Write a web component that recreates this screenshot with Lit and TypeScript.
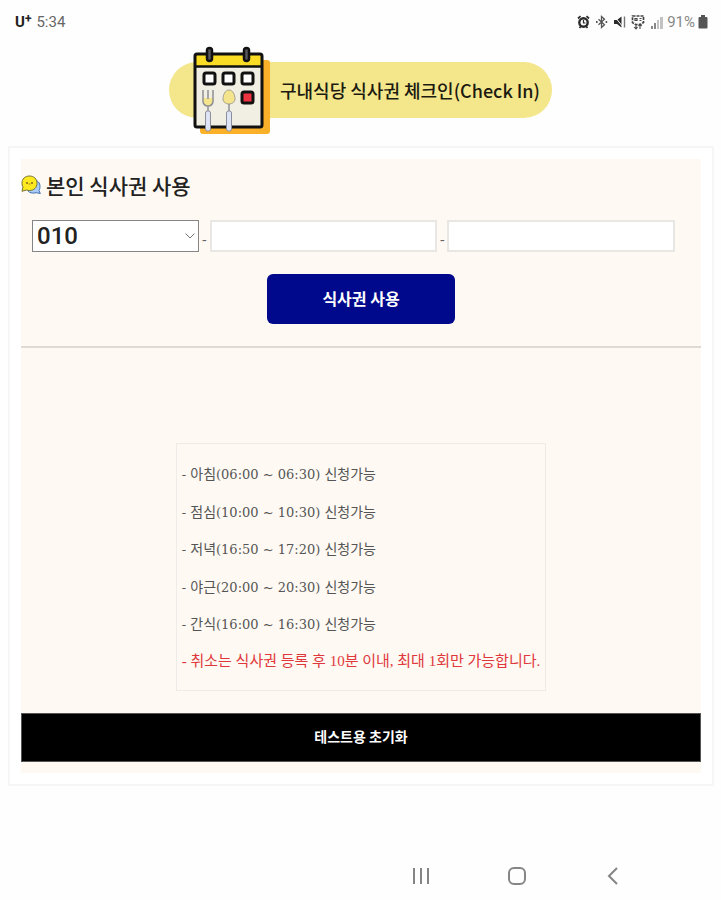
import { LitElement, html, css, svg } from "lit";
import { customElement, state } from "lit/decorators.js";

const MEALS = [
  { name: "아침", time: "(06:00 ~ 06:30)" },
  { name: "점심", time: "(10:00 ~ 10:30)" },
  { name: "저녁", time: "(16:50 ~ 17:20)" },
  { name: "야근", time: "(20:00 ~ 20:30)" },
  { name: "간식", time: "(16:00 ~ 16:30)" },
];

@customElement("status-bar")
class StatusBar extends LitElement {
  static styles = css`
    :host {
      display: flex;
      justify-content: space-between;
      align-items: center;
      height: 44px;
      padding: 0 13px 0 15px;
      font: 15px/20px Roboto, sans-serif;
      color: #666;
    }
    .side {
      display: flex;
      align-items: center;
      gap: 5px;
    }
    .carrier {
      font-weight: 700;
      color: #222;
    }
    .plus {
      font-size: 12px;
      line-height: 12px;
      vertical-align: 4px;
    }
    .battery {
      display: flex;
      align-items: center;
      gap: 3px;
      color: #888;
    }
    svg {
      display: block;
    }
  `;

  render() {
    return html`
      <div class="side">
        <span class="carrier">U<span class="plus">+</span></span>
        <span>5:34</span>
      </div>
      <div class="side">
        <svg width="13" height="14" viewBox="0 0 13 14" fill="none" stroke="#2b2b2b">
          <circle cx="6.5" cy="7.5" r="4.2" stroke-width="2.4" />
          <path d="M1 3.5L3.5 1.2M12 3.5L9.5 1.2M2.5 13l1.5-2M10.5 13L9 11" stroke-width="1.7" />
          <path d="M6.5 5v3h2" stroke-width="1.2" />
        </svg>
        <svg width="13" height="14" viewBox="0 0 13 14" fill="none" stroke="#555" stroke-width="1.3">
          <path d="M3.5 4.2l6 5.6L6.5 12.5V1.5l3 2.7-6 5.6" />
          <path d="M1 7h1.6M10.6 7h1.6" stroke-width="1.8" />
        </svg>
        <svg width="13" height="14" viewBox="0 0 13 14">
          <path d="M1 5h3l4.5-3.500v11L4 9H1z" fill="#2b2b2b" />
          <path d="M1.500 1.500l9 11" stroke="#fff" stroke-width="1" />
          <path d="M11.500 1.500v11" stroke="#777" stroke-width="1.4" />
        </svg>
        <svg width="14" height="15" viewBox="0 0 14 15" fill="none" stroke="#444">
          <path d="M1.500 1h11v6.500l-3 2h-5l-3-2z" stroke-width="1.7" stroke-dasharray="3 1" />
          <path d="M4 3.500h2v2H4zM8.500 3.500h2M8.500 5.500h2" stroke-width="1.2" />
          <path d="M5 9v5M3.200 12L5 14l1.500-2M9 14V9M7.500 11L9 9l1.800 2" stroke-width="1.1" />
        </svg>
        <div class="battery">
          <svg width="14" height="13" viewBox="0 0 14 13">
            <path d="M1 10h2v3H1zM4 7h2v6H4z" fill="#888" />
            <path d="M7 4h2v9H7zM10 1h3v12h-3z" fill="#c2c2c2" />
          </svg>
          <span>91%</span>
          <svg width="10" height="14" viewBox="0 0 10 14">
            <path d="M3 0h4v2h1.500q1 0 1 1v9.500q0 1-1 1h-7q-1 0-1-1V3q0-1 1-1H3z" fill="#555" />
          </svg>
        </div>
      </div>
    `;
  }
}

@customElement("meal-calendar")
class MealCalendar extends LitElement {
  static styles = css`
    :host {
      display: block;
    }
    svg {
      display: block;
    }
  `;

  render() {
    const box = (x: number, y: number, fill: string) =>
      svg`<rect x=${x} y=${y} width="11" height="11" rx="2" fill=${fill} stroke="#111" stroke-width="3" />`;
    return html`
      <svg width="82" height="89" viewBox="-2 -1 82 89" aria-hidden="true">
        <rect x="7" y="13" width="70" height="74" rx="3" fill="#fbb029" />
        <rect x="2" y="7" width="67" height="73" rx="3" fill="#f1eee3" />
        <path d="M2 7h67v12H2z" fill="#fbdc25" />
        <path d="M2 19.500h67" stroke="#111" stroke-width="2.5" />
        <rect x="2" y="7" width="67" height="73" rx="2" fill="none" stroke="#111" stroke-width="3" />
        <rect x="14" y="1" width="5" height="13" rx="2.5" fill="#55555c" stroke="#111" stroke-width="2.5" />
        <rect x="51" y="1" width="5" height="13" rx="2.5" fill="#55555c" stroke="#111" stroke-width="2.5" />
        ${box(11, 26, "#fff")} ${box(30, 26, "#fff")} ${box(49, 26, "#fff")} ${box(49, 45, "#ee3340")}
        <path d="M10 51h10v4q-1 4-5 4t-5-4z" fill="#f4e58c" />
        <path d="M10 43v12q1 4 5 4t5-4V43M15 43v9M15 59v6" fill="none" stroke="#8f8f94" stroke-width="1.5" />
        <path d="M36 43c-4 0-6 5-6 9 0 3 3 5 6 5s6-2 6-5c0-4-2-9-6-9z" fill="#f4e58c" stroke="#a5a294" />
        <path d="M36 57v8" stroke="#8f8f94" stroke-width="1.5" />
        <rect x="12.500" y="64" width="5" height="20" rx="2" fill="#dfe4f4" stroke="#8b8e9c" />
        <rect x="33.500" y="64" width="5" height="20" rx="2" fill="#dfe4f4" stroke="#8b8e9c" />
      </svg>
    `;
  }
}

@customElement("app-root")
class AppRoot extends LitElement {
  static styles = css`
    :host {
      display: flex;
      flex-direction: column;
      min-height: 100vh;
      background: #fefefe;
      color: #222;
      font-family: "Noto Sans CJK KR", sans-serif;
    }
    * {
      box-sizing: border-box;
    }
    .header {
      display: flex;
      justify-content: center;
      padding: 3px 0 10px;
    }
    .pill {
      display: flex;
      align-items: center;
      height: 56px;
      margin: 15px 0 18px;
      padding: 0 12px 0 22px;
      gap: 7px;
      border-radius: 28px;
      background: #f3e68b;
    }
    .pill h1 {
      margin: 0;
      font-size: 18px;
      line-height: 28px;
      font-weight: 500;
      color: #1c1a10;
      white-space: nowrap;
    }
    .panel {
      margin: 0 7px 0 8px;
      padding: 11px;
      border: 2px solid #f6f6f6;
      background: #fff;
    }
    .body {
      display: flex;
      flex-direction: column;
      padding-bottom: 11px;
      background: #fef9f2;
    }
    .title {
      display: flex;
      align-items: center;
      gap: 5px;
      margin: 10px 0 19px;
      font-size: 21px;
      line-height: 32px;
      font-weight: 500;
    }
    .phone {
      display: grid;
      grid-template-columns: 167fr 11px 228fr 10px 228fr;
      padding: 0 26px 0 11px;
    }
    .select {
      position: relative;
      display: flex;
    }
    .select select {
      appearance: none;
      width: 100%;
      height: 32px;
      padding: 0 4px;
      border: 1px solid #858585;
      border-radius: 0;
      background: #fff;
      color: #222;
      font: 500 24px/28px Roboto, sans-serif;
    }
    .select svg {
      position: absolute;
      right: 3px;
      top: 12px;
      pointer-events: none;
    }
    .phone input {
      width: 100%;
      height: 32px;
      padding: 0 6px;
      border: 2px solid #e9e7e3;
      background: #fff;
      font: 500 24px/28px Roboto, sans-serif;
    }
    .dash {
      align-self: end;
      text-align: center;
      font: 14px/24px "Liberation Serif", serif;
      color: #666;
    }
    .use {
      align-self: center;
      width: 188px;
      height: 50px;
      margin: 22px 0;
      padding: 0 0 3px;
      border: 0;
      border-radius: 6px;
      background: #00098c;
      color: #fff;
      font: 700 16px/24px "Noto Sans CJK KR", sans-serif;
    }
    .rule {
      width: 100%;
      margin: 0;
      border: 0;
      border-top: 2px solid #dedbd6;
    }
    .notes {
      display: flex;
      flex-direction: column;
      justify-content: space-between;
      align-self: center;
      min-height: 248px;
      margin: 95px 0 22px;
      padding: 19px 5px;
      border: 1px solid #eeebe8;
      list-style: none;
      font-size: 14px;
      line-height: 20px;
      color: #555;
      white-space: nowrap;
    }
    .num {
      font-family: "DejaVu Serif", serif;
      font-size: 13px;
    }
    .warn {
      font-family: "Liberation Serif", "Noto Sans CJK KR", serif;
      font-size: 15px;
      color: #e0373c;
    }
    .reset {
      width: 100%;
      height: 49px;
      padding: 0 0 3px;
      border: 1px solid #555;
      border-radius: 0;
      background: #000;
      color: #fff;
      font: 700 14px/20px "Noto Sans CJK KR", sans-serif;
    }
    .nav {
      display: grid;
      grid-template-columns: repeat(3, 96px);
      justify-content: end;
      margin-top: auto;
      padding: 0 60px 12px 0;
    }
    .nav button {
      display: flex;
      justify-content: center;
      align-items: center;
      height: 24px;
      padding: 0;
      border: 0;
      background: none;
    }
  `;

  @state() private prefix = "010";

  render() {
    return html`
      <status-bar></status-bar>
      <header class="header">
        <div class="pill">
          <meal-calendar></meal-calendar>
          <h1>구내식당 식사권 체크인(Check In)</h1>
        </div>
      </header>
      <main class="panel">
        <div class="body">
          <h2 class="title">
            <svg width="20" height="20" viewBox="0 0 20 20" aria-hidden="true">
              <path d="M12 5c5 0 7 3 7 6.500 0 2-.5 3-1 4l1.300 3-4-.8C10 19 6 17 6 13z" fill="#a9cbf5" stroke="#426fae" />
              <path d="M8.500 1C13 1 16 4 16 8.200s-3 7.300-7.500 7.300c-1.300 0-2-.1-3-.5L1 16.300 2 12C1.200 11 1 9.500 1 8.200 1 4 4 1 8.500 1z" fill="#ffe91f" stroke="#777437" />
              <circle cx="6" cy="8" r="1" fill="#87651b" />
              <circle cx="11" cy="8" r="1" fill="#87651b" />
              <path d="M7.500 9h2" stroke="#b08a20" />
            </svg>
            본인 식사권 사용
          </h2>
          <div class="phone">
            <div class="select">
              <select
                aria-label="전화번호 앞자리"
                .value=${this.prefix}
                @change=${(e: Event) => (this.prefix = (e.target as HTMLSelectElement).value)}
              >
                <option>010</option>
              </select>
              <svg width="12" height="8" viewBox="0 0 12 8" fill="none" stroke="#777">
                <path d="M1.500 1.500L6 6l4.500-4.500" />
              </svg>
            </div>
            <span class="dash">-</span>
            <input type="tel" maxlength="4" aria-label="전화번호 가운데 자리" />
            <span class="dash">-</span>
            <input type="tel" maxlength="4" aria-label="전화번호 끝자리" />
          </div>
          <button class="use" type="button">식사권 사용</button>
          <hr class="rule" />
          <ul class="notes">
            ${MEALS.map(
              (m) => html`<li><span class="num">- </span>${m.name}<span class="num">${m.time} </span>신청가능</li>`
            )}
            <li class="warn">- 취소는 식사권 등록 후 10분 이내, 최대 1회만 가능합니다.</li>
          </ul>
          <button class="reset" type="button">테스트용 초기화</button>
        </div>
      </main>
      <nav class="nav">
        <button type="button" aria-label="최근 앱">
          <svg width="18" height="18" viewBox="0 0 18 18" stroke="#858585" stroke-width="2">
            <path d="M2 1v16M9 1v16M16 1v16" />
          </svg>
        </button>
        <button type="button" aria-label="홈">
          <svg width="18" height="18" viewBox="0 0 18 18" fill="none" stroke="#858585" stroke-width="2">
            <rect x="1" y="1" width="16" height="16" rx="5" />
          </svg>
        </button>
        <button type="button" aria-label="뒤로">
          <svg width="18" height="18" viewBox="0 0 18 18" fill="none" stroke="#858585" stroke-width="2">
            <path d="M13 1L5 9l8 8" />
          </svg>
        </button>
      </nav>
    `;
  }
}
